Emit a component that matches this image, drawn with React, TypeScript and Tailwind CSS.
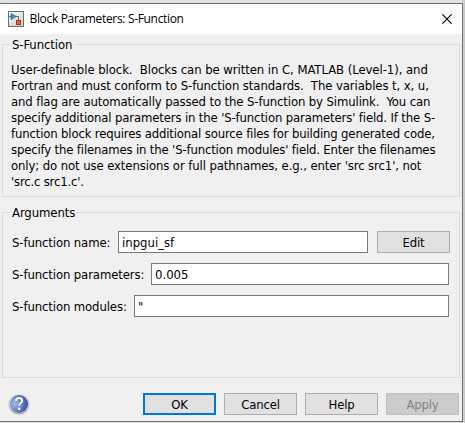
import type { ReactNode } from "react";

const DESCRIPTION = [
  { text: "User-definable block.  Blocks can be written in C, MATLAB (Level-1), and", tracking: "tracking-[-0.07px]" },
  { text: "Fortran and must conform to S-function standards.  The variables t, x, u,", tracking: "tracking-[-0.09px]" },
  { text: "and flag are automatically passed to the S-function by Simulink.  You can", tracking: "tracking-[-0.12px]" },
  { text: "specify additional parameters in the 'S-function parameters' field. If the S-", tracking: "tracking-[-0.145px]" },
  { text: "function block requires additional source files for building generated code,", tracking: "tracking-[-0.16px]" },
  { text: "specify the filenames in the 'S-function modules' field. Enter the filenames", tracking: "tracking-[-0.165px]" },
  { text: "only; do not use extensions or full pathnames, e.g., enter 'src src1', not", tracking: "tracking-[-0.105px]" },
  { text: "'src.c src1.c'.", tracking: "tracking-[-0.2px]" },
];

function Group({ title, className, children }: { title: string; className: string; children: ReactNode }) {
  return (
    <section className={`relative border border-[#dcdcdc] ${className}`}>
      <h2 className="absolute -top-2 left-[7px] bg-[#f0f0f0] px-0.5 leading-4 tracking-[-0.1px]">{title}</h2>
      {children}
    </section>
  );
}

function Field({ label, value, labelWidth, children }: { label: string; value: string; labelWidth: string; children?: ReactNode }) {
  return (
    <div className="flex h-[22px] items-stretch">
      <label className={`shrink-0 pt-px leading-[22px] tracking-[-0.12px] ${labelWidth}`}>{label}</label>
      <div className="min-w-0 flex-1 border border-[#7a7a7a] bg-white pt-px pl-[3px] leading-5">{value}</div>
      {children}
    </div>
  );
}

function Button({ children, look = "border border-[#adadad] bg-[#e1e1e1]" }: { children: string; look?: string }) {
  return (
    <button className={`flex h-[22px] w-[73px] shrink-0 items-center justify-center pt-0.5 leading-4 tracking-[-0.2px] ${look}`}>
      {children}
    </button>
  );
}

function BlockIcon() {
  return (
    <svg width="16" height="16" viewBox="0 0 16 16">
      <defs>
        <linearGradient id="tile" x1="0" y1="0" x2="0.6" y2="1">
          <stop offset="0" stopColor="#ffffff" />
          <stop offset="1" stopColor="#cfcfcf" />
        </linearGradient>
      </defs>
      <rect x="0.5" y="0.5" width="15" height="15" fill="url(#tile)" stroke="#6f6f6f" />
      <path d="M1 5.5H3M8 5.5H10.5V9" fill="none" stroke="#5d6b75" />
      <path d="M3 2.4L8.2 5.5L3 8.6Z" fill="#3c9acb" stroke="#1d6b95" strokeWidth="0.8" />
      <rect x="8.5" y="9.5" width="4" height="4" fill="#e0653a" stroke="#a8381a" />
    </svg>
  );
}

function HelpIcon() {
  return (
    <svg width="22" height="22" viewBox="0 0 22 22">
      <defs>
        <linearGradient id="rim" x1="0" y1="0" x2="0" y2="1">
          <stop offset="0" stopColor="#e6e6e6" />
          <stop offset="1" stopColor="#a0a0a0" />
        </linearGradient>
        <radialGradient id="ball" cx="0.25" cy="0.5" r="0.75">
          <stop offset="0" stopColor="#a5b8e0" />
          <stop offset="0.55" stopColor="#6681c2" />
          <stop offset="1" stopColor="#344f9b" />
        </radialGradient>
      </defs>
      <circle cx="11" cy="11" r="10.6" fill="url(#rim)" />
      <circle cx="11" cy="11" r="9.6" fill="#d5d9e4" />
      <circle cx="11" cy="11" r="9" fill="url(#ball)" />
      <path d="M7.9 7.9C8 5.8 9.5 4.9 11.1 4.9C13 4.9 14.2 6 14.2 7.7C14.2 10 11.2 10 11.2 12.8" fill="none" stroke="#f4f6fb" strokeWidth="2" />
      <circle cx="11.2" cy="15.8" r="1.4" fill="#f4f6fb" />
    </svg>
  );
}

export default function App() {
  return (
    <div className="h-[423px] w-[465px] overflow-hidden bg-linear-to-r from-[#e3e3e3] from-[99%] to-[#c4c4c4] pt-[3px] pr-0.5 font-['DejaVu_Sans_Condensed',sans-serif] text-[13px] text-black">
      <main className="flex h-[419px] flex-col border-t border-r border-b border-[#6e6e6e] bg-[#f0f0f0]">
        <header className="flex h-[30px] shrink-0 items-center bg-white pr-2.5 pl-2">
          <BlockIcon />
          <h1 className="ml-[5.5px] flex-1 font-['Open_Sans',sans-serif] text-[12px] leading-4 tracking-[-0.33px]">Block Parameters: S-Function</h1>
          <svg width="10" height="10" viewBox="0 0 10 10">
            <path d="M0.3 0.3L9.7 9.7M9.7 0.3L0.3 9.7" stroke="#000" strokeWidth="1.1" />
          </svg>
        </header>

        <div className="flex flex-1 flex-col px-[2px] pt-2.5">
          <Group title="S-Function" className="h-[153px] pt-[17px] pl-2">
            {DESCRIPTION.map((line) => (
              <p key={line.text} className={`leading-4 whitespace-pre ${line.tracking}`}>{line.text}</p>
            ))}
          </Group>

          <Group title="Arguments" className="mt-[15px] flex h-[166px] flex-col gap-2.5 pt-[18px] pr-2.5 pl-[9px]">
            <Field label="S-function name:" value="inpgui_sf" labelWidth="w-[106px]">
              <div className="-mr-px ml-[9px]">
                <Button>Edit</Button>
              </div>
            </Field>
            <Field label="S-function parameters:" value="0.005" labelWidth="w-[139px]" />
            <Field label="S-function modules:" value={'"'} labelWidth="w-[122px]" />
          </Group>

          <footer className="mt-[15px] flex items-center gap-2 pr-px pl-1.5">
            <HelpIcon />
            <div className="ml-auto flex gap-2">
              <Button look="border-2 border-[#0078d7] bg-[#e1e1e1]">OK</Button>
              <Button>Cancel</Button>
              <Button>Help</Button>
              <Button look="border border-[#bfbfbf] bg-[#cccccc] text-[#838383]">Apply</Button>
            </div>
          </footer>
        </div>
      </main>
    </div>
  );
}
